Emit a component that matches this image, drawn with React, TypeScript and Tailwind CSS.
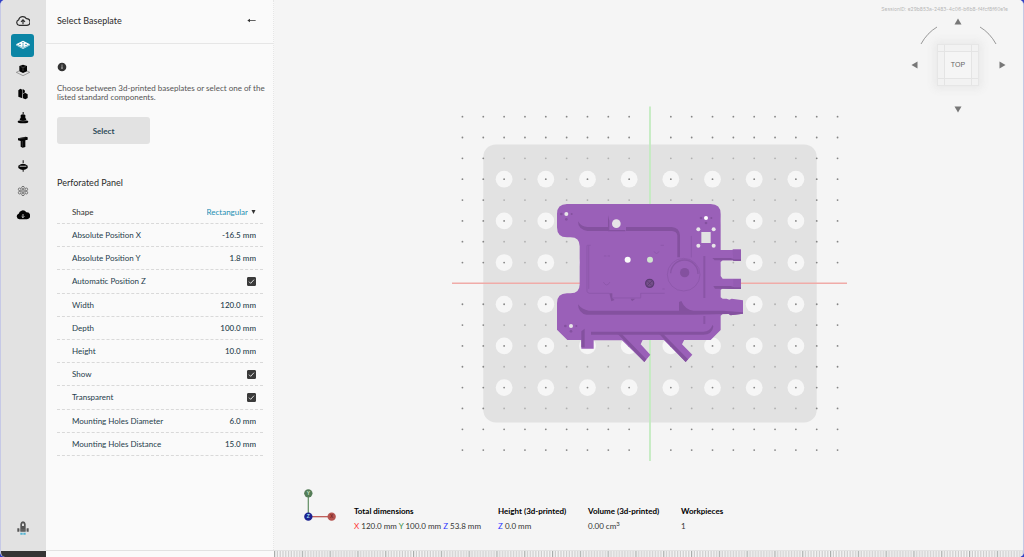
import type { ReactNode } from "react";

function Glyph({ children }: { children: ReactNode }) {
  return (
    <svg viewBox="0 0 42 42" className="h-[14px] w-[14px]" aria-hidden="true">
      {children}
    </svg>
  );
}

const tools: { name: string; icon: ReactNode; active?: boolean }[] = [
  {
    name: "Upload",
    icon: (
      <g fill="none" stroke="#2d2d2d" strokeWidth="3.500">
        <path d="M10 34a8.500 8.500 0 0 1-2-16.500A12.500 12.500 0 0 1 31 14a10 10 0 0 1 2 20z" />
        <path d="M21 31V18M15 23.500 21 17.500l6 6" />
      </g>
    ),
  },
  {
    name: "Baseplate",
    active: true,
    icon: (
      <g>
        <path d="M21 8 42 19v3L21 33 0 22v-3z" fill="#fff" />
        <path d="M0 20 21 30 42 20" fill="none" stroke="#0b85a5" strokeWidth="1.500" />
        <g fill="#0b85a5">
          <ellipse cx="21" cy="14" rx="3" ry="1.500" />
          <ellipse cx="12" cy="19" rx="3" ry="1.500" />
          <ellipse cx="30" cy="19" rx="3" ry="1.500" />
          <ellipse cx="21" cy="24" rx="3" ry="1.500" />
          <ellipse cx="21" cy="19" rx="2" ry="1" />
        </g>
      </g>
    ),
  },
  {
    name: "Workpiece",
    icon: (
      <g>
        <path d="M9 24 1 28l20 10 20-10-8-4" fill="none" stroke="#555" strokeWidth="1.500" />
        <path d="M10 9 21 5l12 4v16l-12 5-11-5z" fill="#050505" />
        <path d="M14 11l7 2.500 8-2.500M21 14v10" fill="none" stroke="#777" strokeWidth="1.500" />
      </g>
    ),
  },
  {
    name: "Supports",
    icon: (
      <g fill="#050505">
        <path d="M7 10 13 5l6 3v26L7 29z" />
        <path d="M20 6l6 4 1 6-7 4z" />
        <path d="M21 21l6-4 8 5v11l-7 4-7-3z" />
      </g>
    ),
  },
  {
    name: "Positioning",
    icon: (
      <g fill="#050505">
        <path d="M20 3h3v6h-3zM14 12q7-5 14 0v13H14z" />
        <ellipse cx="21" cy="25" rx="10" ry="4" />
        <ellipse cx="21" cy="32" rx="16" ry="5" />
        <path d="M9 28q12 5 24 0" fill="none" stroke="#aaa" />
      </g>
    ),
  },
  {
    name: "Clamps",
    icon: (
      <g fill="#050505">
        <path d="M6 10 29 5l6 2v7l-7 2v20l-8 2-6-3V18l-8-2z" />
        <path d="M19 18v17M8 11l20-3" fill="none" stroke="#888" />
      </g>
    ),
  },
  {
    name: "Mounting",
    icon: (
      <g>
        <path d="M20 4h3v8h-3zM20 33h3v5h-3z" fill="#111" />
        <path d="M7 20q14-11 28 0v7q-14 12-28 0z" fill="#050505" />
        <path d="M11 20h20v3H11z" fill="#bbb" />
      </g>
    ),
  },
  {
    name: "Pattern",
    icon: (
      <g fill="none" stroke="#444" strokeWidth="2">
        <circle cx="21" cy="21" r="4" />
        <circle cx="21" cy="11" r="4" />
        <circle cx="21" cy="31" r="4" />
        <circle cx="11" cy="16" r="4" />
        <circle cx="31" cy="16" r="4" />
        <circle cx="11" cy="26" r="4" />
        <circle cx="31" cy="26" r="4" />
      </g>
    ),
  },
  {
    name: "Download",
    icon: (
      <g>
        <path d="M10 34a8.500 8.500 0 0 1-2-16.500A12.500 12.500 0 0 1 31 13a10 10 0 0 1 2 21z" fill="#050505" />
        <path d="M21 18v11M17 25l4 4 4-4" fill="none" stroke="#e2e2e2" strokeWidth="2.500" />
      </g>
    ),
  },
];

function Rocket() {
  return (
    <svg viewBox="0 0 36 42" className="h-[14px] w-[12px]" aria-hidden="true">
      <path d="M10 32V9q1-7 8-8 7 1 8 8v23z" fill="#555" />
      <path d="M15 15V9q3-5 6 0v6z" fill="#ddd" />
      <path d="M1 22h6v10H1zM29 22h6v10h-6z" fill="#555" />
      <path d="M7 27h22" stroke="#777" strokeWidth="2" />
      <path d="M10 35h7v6h-7zM19 35h7v6h-7z" fill="#54b4d3" />
    </svg>
  );
}

function Sidebar() {
  return (
    <nav className="flex w-[45px] shrink-0 flex-col items-center bg-[#e2e2e2] pt-[9px] pr-[2px] pb-3">
      <ul className="grid h-[218px] auto-rows-fr">
        {tools.map((t) => (
          <li key={t.name} className="flex items-center">
            <button
              type="button"
              aria-label={t.name}
              className={
                t.active
                  ? "grid h-[23px] w-[23px] place-items-center rounded-[3px] bg-[#0b85a5]"
                  : "grid h-[23px] w-[23px] place-items-center rounded-[3px]"
              }
            >
              <Glyph>{t.icon}</Glyph>
            </button>
          </li>
        ))}
      </ul>
      <button type="button" aria-label="Launch" className="mt-auto grid h-5 w-6 place-items-center">
        <Rocket />
      </button>
    </nav>
  );
}

const fields: { id: string; label: string; value?: string }[] = [
  { id: "pos-x", label: "Absolute Position X", value: "-16.5 mm" },
  { id: "pos-y", label: "Absolute Position Y", value: "1.8 mm" },
  { id: "auto-z", label: "Automatic Position Z" },
  { id: "width", label: "Width", value: "120.0 mm" },
  { id: "depth", label: "Depth", value: "100.0 mm" },
  { id: "height", label: "Height", value: "10.0 mm" },
  { id: "show", label: "Show" },
  { id: "transparent", label: "Transparent" },
  { id: "hole-diameter", label: "Mounting Holes Diameter", value: "6.0 mm" },
  { id: "hole-distance", label: "Mounting Holes Distance", value: "15.0 mm" },
];

function CheckField({ id }: { id: string }) {
  return (
    <span className="relative flex">
      <input
        id={id}
        type="checkbox"
        defaultChecked
        className="peer h-[9px] w-[9px] appearance-none rounded-[1px] border border-[#3a3a3a] checked:bg-[#3a3a3a]"
      />
      <svg
        viewBox="0 0 27 27"
        className="pointer-events-none absolute inset-0 hidden h-[9px] w-[9px] peer-checked:block"
        aria-hidden="true"
      >
        <path d="M6 14l5 5L21 8" fill="none" stroke="#fff" strokeWidth="2.500" />
      </svg>
    </span>
  );
}

function SettingsPanel() {
  return (
    <aside className="flex w-[228px] shrink-0 flex-col border-r border-dotted border-[#e6e6e6] bg-[#fafafa]">
      <header className="flex h-11 items-center justify-between border-b border-[#e6e6e6] pr-[17px] pb-[2px] pl-[11px]">
        <h1 className="text-[9px] leading-3 text-[#2b2b2b]">Select Baseplate</h1>
        <button type="button" aria-label="Back" className="p-0">
          <svg viewBox="0 0 27 15" className="h-[5px] w-[9px]" aria-hidden="true">
            <path d="M26 7.500H4" stroke="#444" strokeWidth="2.500" />
            <path d="M1 7.500 9 2v11z" fill="#333" />
          </svg>
        </button>
      </header>

      <div className="pr-[10px] pl-[11px]">
        <svg viewBox="0 0 30 30" className="mt-[18px] h-[10px] w-[10px]" aria-hidden="true">
          <circle cx="15" cy="15" r="13" fill="#333" />
          <path d="M15 13v8M15 8v3" stroke="#ccc" strokeWidth="3" />
        </svg>
        <p className="-mr-2 mt-3 text-[8px] leading-[9px] text-[#555]">
          Choose between 3d-printed baseplates or select one of the listed standard components.
        </p>
        <button
          type="button"
          className="mt-[15px] block h-[27px] w-[93px] rounded-[3px] bg-[#e2e2e2] text-[8px] font-bold text-[#2d4a58]"
        >
          Select
        </button>
        <h2 className="mt-[33px] text-[9px] leading-3 text-[#2b2b2b]">Perforated Panel</h2>

        <div className="mt-[11px] text-[8px] leading-3 text-[#1f3d4c]">
          <div className="flex h-6 items-center justify-between border-b border-dashed border-[#d9d9d9] pr-[7px] pl-[15px]">
            <label htmlFor="shape" className="text-[#333]">
              Shape
            </label>
            <span className="flex items-center gap-[3px]">
              <select id="shape" className="appearance-none [field-sizing:content] text-[#1c8fb2]">
                <option>Rectangular</option>
              </select>
              <svg viewBox="0 0 12 12" className="h-1 w-[5px]" aria-hidden="true">
                <path d="M0 0h12L6 12z" fill="#333" />
              </svg>
            </span>
          </div>
          <div className="grid h-[232px] auto-rows-fr">
            {fields.map((f) => (
              <div
                key={f.id}
                className="flex items-center justify-between border-b border-dashed border-[#d9d9d9] pr-[7px] pl-[15px]"
              >
                <label htmlFor={f.id}>{f.label}</label>
                {f.value ? (
                  <input
                    id={f.id}
                    type="text"
                    defaultValue={f.value}
                    className="w-16 bg-transparent text-right font-medium"
                  />
                ) : (
                  <CheckField id={f.id} />
                )}
              </div>
            ))}
          </div>
        </div>
      </div>
    </aside>
  );
}

const STEP = 20.84;
const CX = 650;
const CY = 283.4;

function range(from: number, to: number) {
  return Array.from({ length: to - from + 1 }, (_, i) => from + i);
}

function Manifold() {
  return (
    <g transform="translate(540 190) scale(0.33333)">
      <g fill="#9a60b8">
        <path
          fillRule="evenodd"
          d="M81 42H512Q542 42 542 72V180H578V178H603V213H580V211H548L542 216V258L548 266H578L580 266H603V297H580L548 295 542 300V322L548 326H560L568 329 575 326 609 331V371L572 376 566 372H548L542 377V420L512 450H308L302 463 331 494 313 516 246 451H161V476H124V450H82L51 419V340Q51 310 81 310H92Q119 310 119 283V169Q119 142 92 142H81Q51 142 51 112V72Q51 42 81 42ZM484 126V159H512V126Z"
        />
        <path d="M350 428 437 516 457 494 426 463 433 449 420 430z" />
      </g>
      <g fill="#84519f">
        <path d="M114 94Q124 111 142 111H204V123H142Q114 118 114 94ZM258 111H395Q418 112 420 136V202H412V136Q410 124 396 123H258Z" />
        <path d="M114 343Q126 359 146 362H417V336L424 333Q435 359 460 362H548L609 367V371L572 376 566 372 460 374H140Q115 371 114 343Z" />
        <path d="M153 425H490Q510 425 518 404L520 410Q516 434 490 434H153Z" />
        <path d="M230 428H242L319 508 313 516ZM354 428H366L444 508 437 516ZM124 424 134 416V472H124Z" />
        <path d="M517 204H572L583 208H603V213H580V211H524ZM520 288H572L583 292H603V297H580L525 296Z" />
        <path d="M204 76V124H256V120H208V92ZM208 310H217V324L224 330 214 334ZM272 326H286L276 334Z" />
        <path d="M578 180h25v30h-23zM580 267h22v28h-22z" opacity="0.25" />
        <circle cx="434" cy="248" r="14" />
      </g>
      <g fill="none" stroke="#8a55a6" strokeWidth="2">
        <path d="M141 166V304Q142 310 150 310H208M217 324H302V310H374M142 166H152M362 166H372M367 297H374" />
        <path d="M146 297V168" />
        <path d="M454 138V202" />
        <path d="M493 198V324M493 378V402" strokeWidth="6" />
        <circle cx="431" cy="254" r="49" />
        <path d="M392 250A41 41 0 1 1 474 252" strokeWidth="4" />
        <path d="M190 276Q200 294 210 276M342 184Q350 197 357 184M192 198H199M203 198H210" />
      </g>
      <g fill="#84519f">
        <circle cx="79" cy="88" r="4" />
        <circle cx="64" cy="72" r="4" />
        <circle cx="95" cy="72" r="3" />
        <circle cx="483" cy="84" r="4" />
        <circle cx="514" cy="84" r="3" />
        <circle cx="498" cy="99" r="4" />
        <circle cx="76" cy="408" r="4" />
        <circle cx="109" cy="408" r="3" />
        <circle cx="93" cy="424" r="4" />
      </g>
      <g fill="#e7e5e8">
        <circle cx="79" cy="72" r="6" />
        <circle cx="229" cy="101" r="13" />
        <circle cx="498" cy="84" r="6" fill="#fff" />
        <circle cx="475" cy="118" r="6" />
        <circle cx="521" cy="118" r="6" />
        <circle cx="475" cy="167" r="6" />
        <circle cx="521" cy="167" r="6" />
        <circle cx="93" cy="408" r="6" />
        <circle cx="263" cy="209" r="9" fill="#fafafa" />
        <circle cx="330" cy="209" r="9" fill="#cfe3cf" />
      </g>
      <circle cx="329" cy="280" r="12" fill="#76508b" stroke="#5c3c74" strokeWidth="4" />
      <path d="M322 273 336 287M336 273 322 287" stroke="#543768" strokeWidth="2" />
    </g>
  );
}

function Scene() {
  return (
    <svg
      viewBox="274 0 749 550"
      className="absolute inset-0 h-full w-full"
      role="img"
      aria-label="Top view of the workpiece on the perforated panel"
    >
      <rect x={CX - STEP * 8} y={CY - 139} width={STEP * 16} height={278} rx="12.500" fill="#e2e2e2" />
      {range(-4, 3).map((i) =>
        range(-3, 2).map((j) => (
          <circle key={`${i}:${j}`} cx={CX + STEP * (2 * i + 1)} cy={CY + STEP * (2 * j + 1)} r="8.400" fill="#f6f6f6" />
        )),
      )}
      {range(-9, 9).map((i) =>
        range(-8, 8).map((j) =>
          i === 0 || j === 0 ? null : (
            <circle
              key={`${i}:${j}`}
              cx={CX + STEP * i}
              cy={CY + STEP * j}
              r="0.900"
              fill={Math.abs(i) < 8 && Math.abs(j) < 7 && (i % 2 === 0 || j % 2 === 0) ? "#b0b0b0" : "#858585"}
            />
          ),
        ),
      )}
      <path d="M452 283.300H847" stroke="#f0aba8" strokeWidth="1.500" />
      <path d="M650 106.500V461" stroke="#c3ebc0" strokeWidth="1.800" />
      <Manifold />
    </svg>
  );
}

function ViewCube() {
  const arrow = "grid place-items-center";
  return (
    <div className="relative mt-[3px] mr-4 grid h-[98px] w-[98px] grid-cols-[10px_1fr_10px] grid-rows-[10px_1fr_10px]">
      <svg viewBox="0 0 98 98" className="pointer-events-none absolute inset-0" aria-hidden="true">
        <path d="M12 28Q18 17 28 11M71 11Q81 17 87 28" fill="none" stroke="#999" />
      </svg>
      <button type="button" aria-label="Rotate up" className={`${arrow} col-start-2`}>
        <svg viewBox="0 0 8 7" className="h-[7px] w-2">
          <path d="M4 .500 7.500 6.500H.500z" fill="#777" />
        </svg>
      </button>
      <button type="button" aria-label="Rotate left" className={`${arrow} col-start-1 row-start-2`}>
        <svg viewBox="0 0 7 8" className="h-2 w-[7px]">
          <path d="M.500 4 6.500.500v7z" fill="#777" />
        </svg>
      </button>
      <button
        type="button"
        className="col-start-2 row-start-2 m-auto grid h-[42px] w-[42px] grid-cols-[6px_1fr_6px] grid-rows-[6px_1fr_6px] gap-px border border-[#e6e6e6] bg-[#e4e4e4] shadow-[0_0_8px_3px_#e9e9e9]"
      >
        <span className="bg-[#f2f2f2]" />
        <span className="bg-[#f2f2f2]" />
        <span className="bg-[#f2f2f2]" />
        <span className="bg-[#f2f2f2]" />
        <span className="flex items-center justify-center bg-[#f5f5f5] font-['Liberation_Sans',sans-serif] text-[7px] leading-[8px] text-[#666]">
          TOP
        </span>
        <span className="bg-[#f2f2f2]" />
        <span className="bg-[#f2f2f2]" />
        <span className="bg-[#f2f2f2]" />
        <span className="bg-[#f2f2f2]" />
      </button>
      <button type="button" aria-label="Rotate right" className={`${arrow} col-start-3 row-start-2`}>
        <svg viewBox="0 0 7 8" className="h-2 w-[7px]">
          <path d="M6.500 4 .500.500v7z" fill="#777" />
        </svg>
      </button>
      <button type="button" aria-label="Rotate down" className={`${arrow} col-start-2 row-start-3`}>
        <svg viewBox="0 0 8 7" className="h-[7px] w-2">
          <path d="M4 6.500.500.500h7z" fill="#777" />
        </svg>
      </button>
    </div>
  );
}

function AxisTriad() {
  return (
    <svg
      viewBox="0 0 102 102"
      className="h-[34px] w-[34px] font-['Liberation_Sans',sans-serif] text-[15px] font-bold"
      aria-hidden="true"
    >
      <path d="M16 85V16" stroke="#6f9770" strokeWidth="4" />
      <path d="M16 86H86" stroke="#c0605c" strokeWidth="4" />
      <circle cx="16" cy="16" r="12.500" fill="#557d58" />
      <circle cx="86" cy="86" r="12.500" fill="#b55450" />
      <circle cx="16" cy="86" r="12.500" fill="#1c2390" />
      <g textAnchor="middle">
        <text x="16" y="21" fill="#c8e6c4">Y</text>
        <text x="86" y="91" fill="#7c2420">X</text>
        <text x="16" y="91" fill="#a5e0f0">Z</text>
      </g>
    </svg>
  );
}

function Footer() {
  return (
    <footer className="relative mt-auto flex items-start pb-4 pl-[29px]">
      <AxisTriad />
      <dl className="mt-4 ml-[17px] flex text-[8px] leading-[15px] whitespace-nowrap text-[#333]">
        <div className="w-36">
          <dt className="font-bold text-black">Total dimensions</dt>
          <dd>
            <span className="text-[#f33]">X</span> 120.0 mm <span className="text-[#2f8a3a]">Y</span> 100.0 mm{" "}
            <span className="text-[#2a35ff]">Z</span> 53.8 mm
          </dd>
        </div>
        <div className="w-[90px]">
          <dt className="font-bold text-black">Height (3d-printed)</dt>
          <dd>
            <span className="text-[#2a35ff]">Z</span> 0.0 mm
          </dd>
        </div>
        <div className="w-[93px]">
          <dt className="font-bold text-black">Volume (3d-printed)</dt>
          <dd>
            0.00 cm<sup className="text-[6px]">3</sup>
          </dd>
        </div>
        <div>
          <dt className="font-bold text-black">Workpieces</dt>
          <dd>1</dd>
        </div>
      </dl>
    </footer>
  );
}

function Ruler() {
  return (
    <svg className="h-[7px] min-w-0 flex-1 bg-[#f4f4f4]" aria-hidden="true">
      <defs>
        <pattern id="ticks" width="27.800" height="7" patternUnits="userSpaceOnUse">
          {range(0, 9).map((i) => (
            <rect key={i} x={i * 2.78} y="0" width="1.200" height="7" fill={i === 0 ? "#a9adab" : "#cccccc"} />
          ))}
        </pattern>
      </defs>
      <rect width="100%" height="7" fill="url(#ticks)" />
    </svg>
  );
}

export default function App() {
  return (
    <div className="min-h-screen bg-[#3040c4] font-['Lato',sans-serif]">
      <div className="flex min-h-screen flex-col overflow-hidden rounded-[5px] border-x border-[#c6c9e6] bg-[#f5f5f5]">
        <div className="flex flex-1">
          <Sidebar />
          <SettingsPanel />
          <main className="relative flex min-w-0 flex-1 flex-col bg-[#f5f5f5]">
            <Scene />
            <div className="relative flex flex-col items-end">
              <p className="mt-[5px] mr-[15px] font-['Inter',sans-serif] text-[5px] leading-[8px] text-[#b8b8b8]">
                SessionID: e29b853a-2483-4c06-b6b8-f4fcf8f60e1e
              </p>
              <ViewCube />
            </div>
            <Footer />
          </main>
        </div>
        <div className="flex h-[7px] border-t border-[#e2e2e2]">
          <div className="w-[45px] bg-[#353535]" />
          <div className="w-[228px] bg-[#fafafa]" />
          <Ruler />
        </div>
      </div>
    </div>
  );
}
